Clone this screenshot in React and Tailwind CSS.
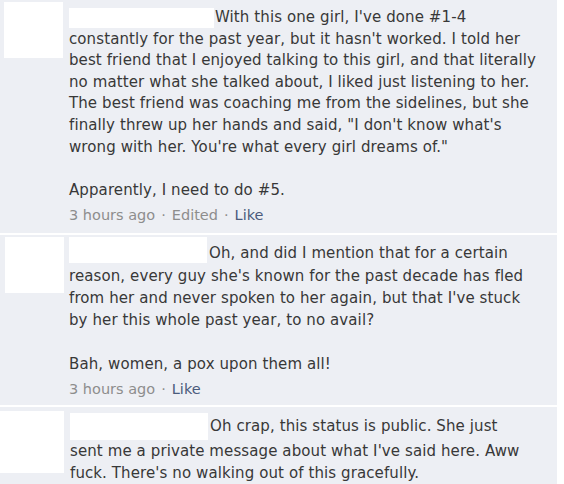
import React from "react";

const font = { fontFamily: '"DejaVu Sans", "Open Sans", sans-serif' };

const firstLines = [
  "constantly for the past year, but it hasn't worked. I told her",
  "best friend that I enjoyed talking to this girl, and that literally",
  "no matter what she talked about, I liked just listening to her.",
  "The best friend was coaching me from the sidelines, but she",
  'finally threw up her hands and said, "I don\'t know what\'s',
  'wrong with her. You\'re what every girl dreams of."',
  "",
  "Apparently, I need to do #5.",
];

function Meta({ items }) {
  return (
    <div className="h-[22px] leading-[22px] text-[14.5px] tracking-normal text-[#8d8d8d] whitespace-nowrap">
      {items.map((m) => (
        <span key={m}>
          {m}
          <span className="px-[6px]">·</span>
        </span>
      ))}
      <span className="text-[#4b5b7c]">Like</span>
    </div>
  );
}

function Line({ children, tall }) {
  return (
    <div
      className={
        tall
          ? "h-[22px] leading-[22px] whitespace-nowrap"
          : "h-[21.6px] leading-[21.6px] whitespace-nowrap"
      }
    >
      {children || "\u00a0"}
    </div>
  );
}

export default function App() {
  return (
    <div className="w-[564px] h-[484px] bg-white overflow-hidden text-[#383838] text-[15px] tracking-[0.1px]" style={font}>
      {/* comment 1 */}
      <div className="w-[557px] h-[233px] bg-[#edeff4] flex">
        <div className="w-[59px] h-[56px] bg-white mt-[2px] ml-[4px] shrink-0" />
        <div className="ml-[6px] pt-[7px]">
          <Line>
            <span className="inline-block align-top w-[145px] h-[20px] mt-[1px] bg-white mr-[1px]" />
            With this one girl, I've done #1-4
          </Line>
          {firstLines.map((l, i) => (
            <Line key={i}>{l}</Line>
          ))}
          <div className="pt-[3px]">
            <Meta items={["3 hours ago", "Edited"]} />
          </div>
        </div>
      </div>

      {/* comment 2 */}
      <div className="w-[557px] h-[170px] mt-[2px] bg-[#edeff4] flex">
        <div className="w-[59px] h-[56px] bg-white mt-[2px] ml-[5px] shrink-0" />
        <div className="ml-[5px] pt-[2px]">
          <div className="h-[28px] leading-[32px] whitespace-nowrap">
            <span className="inline-block align-top w-[138px] h-[26px] bg-white mr-[2px]" />
            Oh, and did I mention that for a certain
          </div>
          <Line tall>reason, every guy she's known for the past decade has fled</Line>
          <Line tall>from her and never spoken to her again, but that I've stuck</Line>
          <Line tall>by her this whole past year, to no avail?</Line>
          <Line tall />
          <Line tall>Bah, women, a pox upon them all!</Line>
          <div className="pt-[3px]">
            <Meta items={["3 hours ago"]} />
          </div>
        </div>
      </div>

      {/* comment 3 */}
      <div className="w-[557px] h-[80px] mt-[2px] bg-[#edeff4] flex">
        <div className="w-[64px] h-[62px] bg-white mt-[4px] shrink-0" />
        <div className="ml-[6px] pt-[6px]">
          <div className="h-[27px] leading-[26px] whitespace-nowrap">
            <span className="inline-block align-top w-[138px] h-[27px] bg-white mr-[2px]" />
            Oh crap, this status is public. She just
          </div>
          <Line tall>sent me a private message about what I've said here. Aww</Line>
          <Line tall>fuck. There's no walking out of this gracefully.</Line>
        </div>
      </div>
    </div>
  );
}
